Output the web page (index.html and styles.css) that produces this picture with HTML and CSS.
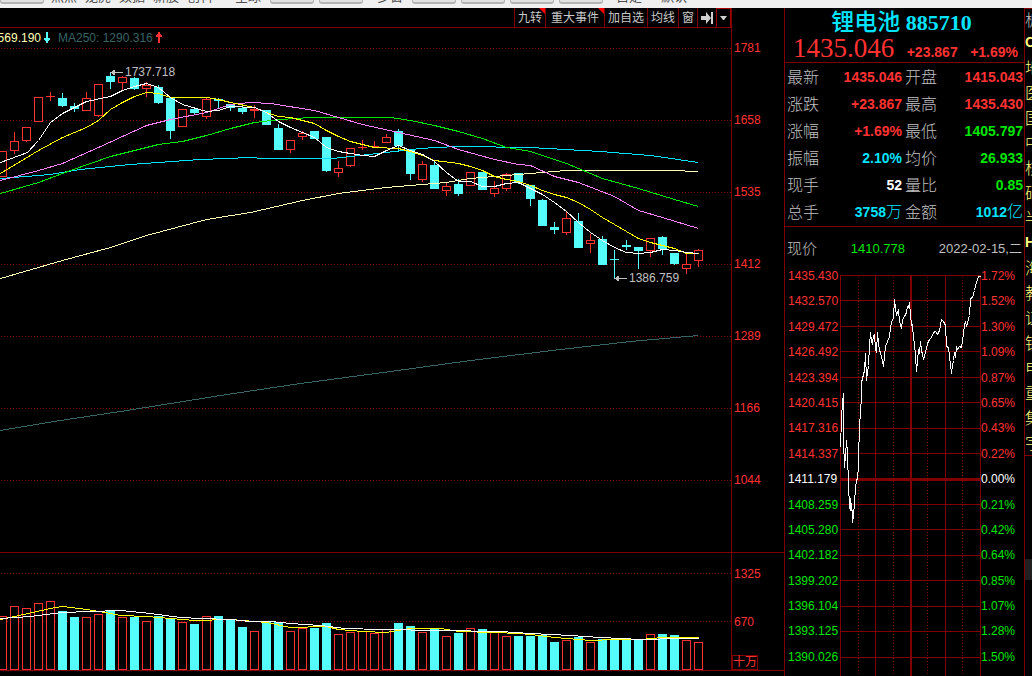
FILE: index.html
```html
<!DOCTYPE html>
<html lang="zh-CN">
<head>
<meta charset="utf-8">
<title>锂电池 885710</title>
<link rel="stylesheet" href="styles.css">
</head>
<body>
<nav class="toolbar">
  <button class="tool">个股</button>
  <div class="links"><a href="#">热点</a><a href="#">龙虎</a><a href="#">数据</a><a href="#">新股</a><a href="#">创科</a></div>
  <div class="links single"><a href="#">全球</a></div>
  <button class="tool">行情</button><button class="tool">期指</button>
  <div class="links single"><a href="#">多窗</a></div>
  <button class="tool">竞价</button><button class="tool">自选</button><button class="tool">大盘</button><button class="tool">涨幅</button>
  <div class="links wide"><a href="#">自定</a><a href="#">默认</a></div>
</nav>
<main class="workspace">
  <section class="charts">
    <div class="pane">
      <div class="plot">
        <div class="tabs">
          <button class="tab flagged">九转</button>
          <button class="tab flagged roomy">重大事件</button>
          <button class="tab">加自选</button>
          <button class="tab">均线</button>
          <button class="tab">窗</button>
          <button class="tab" aria-label="收起"><svg width="12" height="12"><path d="M0 4h5V0l5 6-5 6V8H0zM10 0h2v12h-2z" fill="#d0d0d0"/></svg></button>
          <button class="tab last" aria-label="更多"><svg width="7" height="4"><path d="M0 0h7L4 4H3z" fill="#d0d0d0"/></svg></button>
        </div>
        <div class="legend">
          <span class="ma-pale">569.190</span>
          <svg width="6" height="11"><path d="M2 0h2v6h2v2H5v1H4v2H2V9H1V8H0V6h2z" fill="#54fcfc"/></svg>
          <span class="ma-250">MA250: 1290.316</span>
          <svg width="6" height="11"><path d="M2 11h2V5h2V3H5V2H4V0H2v2H1v1H0v2h2z" fill="#ff3232"/></svg>
        </div>
        <svg class="chart" id="price" viewBox="0 47 731 505" height="505" preserveAspectRatio="xMaxYMin slice"></svg>
      </div>
      <div class="axis price-axis">
        <span>1781</span><span>1658</span><span>1535</span><span>1412</span><span>1289</span><span>1166</span><span>1044</span>
      </div>
    </div>
    <div class="pane">
      <div class="plot"><svg class="chart" id="volume" viewBox="0 553 731 117" height="117" preserveAspectRatio="xMaxYMin slice"></svg></div>
      <div class="axis volume-axis"><span>1325</span><span>670</span><span class="unit">十万</span></div>
    </div>
  </section>
  <aside class="quote">
    <header class="head">
      <h1 class="name"><span class="cn">锂电池</span> 885710</h1>
      <div class="last-price"><strong class="big">1435.046</strong><b>+23.867</b><b>+1.69%</b></div>
    </header>
    <table class="stats">
      <tr><th>最新</th><td class="up">1435.046</td><th>开盘</th><td class="up">1415.043</td></tr>
      <tr><th>涨跌</th><td class="up">+23.867</td><th>最高</th><td class="up">1435.430</td></tr>
      <tr><th>涨幅</th><td class="up">+1.69%</td><th>最低</th><td class="down">1405.797</td></tr>
      <tr><th>振幅</th><td class="info">2.10%</td><th>均价</th><td class="down">26.933</td></tr>
      <tr><th>现手</th><td class="flat">52</td><th>量比</th><td class="down">0.85</td></tr>
      <tr><th>总手</th><td class="info">3758<span class="zh">万</span></td><th>金额</th><td class="info">1012<span class="zh">亿</span></td></tr>
    </table>
    <div class="now"><span class="now-label">现价</span><span class="down">1410.778</span><time datetime="2022-02-15">2022-02-15,<span class="day">二</span></time></div>
    <div class="minute">
      <div class="scale left">
        <span>1435.430</span><span>1432.570</span><span>1429.472</span><span>1426.492</span><span>1423.394</span><span>1420.415</span><span>1417.316</span><span>1414.337</span><span class="flat">1411.179</span><span class="down">1408.259</span><span class="down">1405.280</span><span class="down">1402.182</span><span class="down">1399.202</span><span class="down">1396.104</span><span class="down">1393.125</span><span class="down">1390.026</span>
      </div>
      <svg class="chart" id="minute" viewBox="840 268 141 408" height="408"></svg>
      <div class="scale">
        <span>1.72%</span><span>1.52%</span><span>1.30%</span><span>1.09%</span><span>0.87%</span><span>0.65%</span><span>0.43%</span><span>0.22%</span><span class="flat">0.00%</span><span class="down">0.21%</span><span class="down">0.42%</span><span class="down">0.64%</span><span class="down">0.85%</span><span class="down">1.07%</span><span class="down">1.28%</span><span class="down">1.50%</span>
      </div>
    </div>
  </aside>
  <aside class="sectors">
    <div class="sector-title">板</div>
    <ul class="sector-list">
      <li class="latin">C</li><li>地</li><li>医</li><li>国</li><li>中</li><li>核</li><li>硝</li><li>半</li><li class="latin">H</li><li>海</li><li>教</li><li>证</li><li>钠</li><li>电</li><li>重</li><li>集</li><li>字</li>
    </ul>
    <div class="thumb"></div>
  </aside>
</main>
<script src="chart.js"></script>
</body>
</html>
```

FILE: styles.css
```css
* { box-sizing: border-box; }

body {
  margin: 0;
  min-height: 100vh;
  display: flex;
  flex-direction: column;
  background: #000;
  color: #c0c0c0;
  font: 12px/16px "Liberation Sans", "Noto Sans CJK SC", sans-serif;
  overflow: hidden;
}

button { font: inherit; color: inherit; background: none; border: 0; padding: 0; margin: 0; }
svg { display: block; }

.toolbar {
  height: 8px;
  flex: none;
  overflow: hidden;
  display: flex;
  align-items: flex-end;
  gap: 5px;
  padding-bottom: 4px;
  background: #f0f0f0;
}
.tool {
  width: 44px;
  height: 22px;
  flex: none;
  line-height: 18px;
  border: 1px solid #b4b4b4;
  border-bottom-width: 2px;
  border-radius: 3px;
  background: #e2e2e2;
  color: #1e64c8;
  font-weight: bold;
}
.links { display: flex; margin-left: 2px; }
.links a { width: 34px; line-height: 15px; color: #505050; text-decoration: none; font-size: 13px; }
.links.single { margin-left: 9px; }
.links.single a { width: 30px; }
.links.wide { margin-left: 8px; }
.links.wide a { width: 45px; }

.workspace { flex: 1; display: flex; }
.charts { flex: 1; min-width: 0; }
.pane { display: flex; border-bottom: 1px solid #800000; }
.plot { flex: 1; min-width: 0; }
.chart { width: 100%; shape-rendering: crispEdges; overflow: hidden; }
.note { font: 12px "Liberation Sans", sans-serif; fill: #c0c0c0; }

.tabs { display: flex; justify-content: flex-end; height: 20px; border-bottom: 1px solid #800000; }
.tab {
  display: flex;
  align-items: center;
  padding: 0 3px;
  border-left: 1px solid #800000;
  color: #c8c8c8;
  position: relative;
}
.tab.roomy { padding: 0 5px; }
.tab.last { border: 1px solid #a00000; border-bottom: 0; }
.flagged::after {
  content: "";
  position: absolute;
  top: 0;
  right: 0;
  border-top: 6px solid #ff0000;
  border-left: 6px solid transparent;
}

.legend { display: flex; align-items: center; height: 19px; }
.legend svg { margin: 0 8px 0 3px; }
.ma-pale { width: 41px; display: flex; justify-content: flex-end; color: #ffffb4; }
.ma-250 { color: #376464; }
.legend .ma-250 + svg { margin: 0 3px; }

.axis { width: 53px; border-left: 1px solid #800000; color: #ff3232; display: flex; flex-direction: column; }
.axis span { padding-left: 2px; }
.price-axis { padding-top: 4px; }
.price-axis span { line-height: 72px; }
.volume-axis { padding-top: 11px; }
.volume-axis span { line-height: 20px; }
.volume-axis span:first-child { margin-bottom: 28px; }
.volume-axis .unit {
  width: 26px;
  margin-top: auto;
  padding: 0;
  line-height: 13px;
  white-space: nowrap;
  border: 1px solid #800000;
}

.quote { width: 241px; border: solid #800000; border-width: 0 1px; }
.head { height: 55px; border-bottom: 1px solid #800000; }
.name { margin: 0; text-align: center; font: bold 22px/24px "Liberation Serif", serif; color: #00e4ff; padding-right: 6px; }
.name .cn { font: 500 23px/24px "Noto Sans CJK SC", sans-serif; }
.last-price { display: flex; align-items: baseline; justify-content: space-between; padding: 0 6px 0 8px; color: #ff3232; font-size: 14px; line-height: 26px; }
.big { font: 27px/26px "Liberation Serif", serif; }

.stats { width: 100%; border-spacing: 0; padding: 1px 1px 0 2px; border-bottom: 1px solid #800000; table-layout: fixed; }
.stats th { width: 33px; height: 27px; padding: 0; text-align: left; vertical-align: top; font: 300 16px/25px "Noto Sans CJK SC", sans-serif; white-space: nowrap; }
.stats td { padding: 0 3px 0 0; text-align: right; vertical-align: top; font-weight: bold; font-size: 14px; line-height: 27px; }
.stats td:last-child { padding-right: 0; }
.zh { font: 300 16px/20px "Noto Sans CJK SC", sans-serif; }
.up { color: #ff3232; }
.down { color: #00e600; }
.info { color: #00e4ff; }
.flat { color: #ffffff; }

.now { display: flex; align-items: center; justify-content: space-between; height: 41px; padding: 3px 2px 0; font-size: 13px; }
.now-label { font-size: 15px; font-weight: 300; }
.minute { display: grid; grid-template-columns: 55px 141px 1fr; }
.scale { display: flex; flex-direction: column; justify-content: space-between; color: #ff3232; padding-bottom: 11px; }
.scale .down { color: #00e600; }
.scale .flat { color: #ffffff; }
.scale.left { padding-left: 3px; }

.sectors { width: 7px; overflow: hidden; border-top: 1px solid #800000; font: 300 16px/25px "Noto Sans CJK SC", sans-serif; }
.sector-title { line-height: 21px; height: 21px; width: 16px; }
.sector-list { list-style: none; margin: 0; padding: 0; color: #ffff80; border-bottom: 1px solid #800000; }
.sector-list li { width: 16px; height: 25px; }
.sector-list .latin { font: bold 14px/25px "Liberation Sans", sans-serif; }
.thumb { margin-top: 103px; height: 21px; background: #202020; }
```

FILE: chart.js
```js
const UP = '#ff3232', DOWN = '#54fcfc', GRID = '#800000';
const STEP = 12, FIRST = 2, BASE = 670;

// direction, high, body top, body bottom, low, volume top
const bars = [
  ['u',151,151,177,177,616],['u',132,141,151,154,606],['u',127,127,141,142,608],['u',97,97,122,122,603],
  ['u',92,96,97,101,601],['d',93,98,106,107,611],['d',103,106,109,112,617],['u',92,98,111,111,617],
  ['u',84,84,116,117,614],['d',73,76,82,89,610],['u',76,77,83,90,617],['d',77,78,89,90,617],
  ['u',82,85,89,97,621],['d',85,87,103,104,616],['d',98,98,131,139,618],['u',109,109,127,127,622],
  ['d',108,109,113,114,624],['u',97,99,117,119,616],['d',98,99,101,109,616],['d',104,104,108,111,620],
  ['d',106,108,112,114,627],['u',105,109,111,118,631],['d',110,110,125,125,622],['d',124,128,150,150,622],
  ['u',140,140,150,153,631],['u',131,133,137,140,628],['d',131,131,139,139,628],['d',137,137,171,172,623],
  ['u',161,168,173,177,634],['u',148,148,166,167,632],['u',140,147,148,150,631],['u',141,146,147,147,633],
  ['u',134,137,143,143,629],['d',129,131,146,152,623],['d',149,149,174,180,626],['u',161,164,180,182,632],
  ['d',161,165,189,189,628],['u',182,186,191,196,636],['d',179,184,194,196,633],['u',172,172,186,186,628],
  ['d',172,172,190,190,629],['u',181,188,194,197,632],['u',173,174,189,191,636],['d',173,173,182,184,636],
  ['d',185,185,199,206,636],['d',199,200,226,226,635],['d',222,227,230,234,642],['u',212,218,233,235,640],
  ['d',213,221,248,248,637],['u',234,240,244,253,642],['d',236,239,265,265,639],['d',250,259,260,279,639],
  ['d',240,245,247,250,639],['d',247,247,251,269,639],['u',238,238,251,257,634],['d',236,237,249,255,634],
  ['d',253,253,264,265,635],['u',253,264,269,274,640],['u',249,250,261,267,642]
];

const averages = [
  ['#376464', '0,430 60,420 120,411 170,403 220,395 300,383 390,371 470,360 560,349 630,341 698,335'],
  ['#ffffb4', '0,278 62,260 110,247 146,235 206,219 250,212 302,200 338,193 386,187 422,184 446,182 470,178 530,173 566,170 670,170 698,171'],
  ['#00e4ff', '0,178 50,174 80,169 130,164 200,159 250,157 262,158 332,158 350,156 386,152 410,149 434,147 460,146 530,147 600,151 650,155 698,162'],
  ['#00e600', '0,193 38,182 70,170 110,156 158,144 182,141 206,135 230,128 254,122 280,119 310,117 390,117 410,120 434,125 458,131 482,138 506,147 530,151 566,163 602,178 638,188 674,199 698,206'],
  ['#ff80ff', '0,180 38,170 62,163 98,147 146,125 170,119 206,112 230,104 250,102 270,103 314,110 338,117 362,124 398,132 434,140 458,149 494,159 518,164 530,165 554,176 578,182 614,196 638,210 662,217 698,228'],
  ['#ffff00', '0,173 38,150 62,137 86,127 98,120 110,109 122,102 134,96 146,92 158,93 170,97 206,97 218,99 230,102 254,107 266,112 278,116 290,117 302,120 314,123 326,130 338,136 350,141 362,144 374,147 398,148 410,151 422,155 434,160 458,163 470,166 482,170 494,176 506,179 518,181 530,185 542,190 554,194 566,197 578,202 590,209 602,217 614,224 626,231 638,238 650,242 662,245 674,248 686,253 698,253'],
  ['#ffffff', '0,162 27,152 38,140 50,122 62,113 86,101 110,96 122,90 134,86 146,83 158,87 170,97 182,104 206,111 218,110 230,106 254,107 266,112 278,121 290,127 314,137 326,147 338,151 350,153 362,155 374,156 386,150 398,145 410,150 422,154 434,161 446,172 458,181 470,181 482,186 494,186 506,183 518,182 530,188 542,194 554,202 566,211 578,222 590,232 602,240 614,247 626,252 638,253 650,252 662,249 674,250 686,252 698,253']
];

const volumeAverages = [
  ['#ffff00', '0,619 14,616 50,608 62,606 86,609 98,611 110,613 120,615 146,616 170,618 194,620 230,619 266,622 290,627 326,626 338,629 362,631 386,632 398,630 410,628 440,628 458,631 494,632 518,633 530,634 554,637 590,640 614,639 640,639 662,637 698,637'],
  ['#ffffff', '0,618 30,616 62,612 90,611 120,610 150,613 180,617 200,618 230,619 250,621 270,621 290,623 320,625 345,628 380,629 440,630 500,631 530,633 570,635 600,637 640,639 680,638 698,638']
];

const intraday = '840,447 841,418 842,402 843,393 843,440 844,467 845,455 846,440 847,453 848,485 849,506 850,510 850,498 852,514 852,522 853,515 854,502 855,488 856,480 857,478 858,465 858,453 859,430 860,408 861,400 861,382 863,374 864,370 865,353 866,380 867,372 868,365 869,345 870,332 871,341 872,343 873,335 874,334 875,349 876,352 877,332 878,343 879,349 880,353 882,360 883,366 884,355 885,346 887,341 889,336 890,328 891,322 893,317 894,299 895,308 896,314 898,310 899,321 901,328 902,319 904,316 906,312 907,306 908,307 909,302 910,314 911,325 912,324 913,338 914,343 915,355 916,371 917,360 918,350 919,352 920,341 921,350 922,354 923,359 925,352 927,343 929,339 931,337 933,332 935,331 937,334 939,330 940,325 941,319 943,321 945,325 946,346 948,347 949,356 951,373 952,365 953,360 954,352 955,357 956,347 957,349 959,346 961,347 962,340 964,325 965,321 966,326 967,322 969,315 970,298 972,297 974,290 976,282 978,276 980,276';

const box = (x, y, w, h, fill) => `<rect x="${x}" y="${y}" width="${w}" height="${h}" fill="${fill}"/>`;
const frame = (x, y, w, h) => `<rect x="${x + 0.5}" y="${y + 0.5}" width="${w - 1}" height="${h - 1}" fill="#000" stroke="${UP}"/>`;
const curve = ([color, points]) => `<polyline points="${points}" transform="translate(0.5 0.5)" fill="none" stroke="${color}"/>`;
const dotted = y => `<path d="M1 ${y + 0.5}H731" stroke="${GRID}" stroke-dasharray="1 2"/>`;

function candle([dir, high, top, bottom, low], i) {
  const x = FIRST + i * STEP, color = dir === 'u' ? UP : DOWN;
  const wick = box(x, high, 1, low - high, color);
  const body = dir === 'u' && bottom - top > 2
    ? frame(x - 4, top, 9, bottom - top)
    : box(x - 4, top, 9, bottom - top, color);
  return wick + body;
}

function volumeBar(bar, i) {
  const x = FIRST + i * STEP - 4, top = bar[5];
  return bar[0] === 'u' ? frame(x, top, 9, BASE - top) : box(x, top, 9, BASE - top, DOWN);
}

document.getElementById('price').innerHTML =
  [48, 120, 192, 264, 336, 408, 480].map(dotted).join('') +
  bars.map(candle).join('') + averages.map(curve).join('') +
  '<path d="M111 72.5H123M111 72.5l3-2v4zM615 278.5H627M615 278.5l3-2v4z" stroke="#c0c0c0" fill="#c0c0c0"/>' +
  '<text class="note" x="125" y="76">1737.718</text><text class="note" x="629" y="282">1386.759</text>';

document.getElementById('volume').innerHTML =
  [573, 621].map(dotted).join('') + bars.map(volumeBar).join('') + volumeAverages.map(curve).join('');

const rows = [275, 300, 326, 351, 377, 402, 428, 453, 504, 529, 555, 580, 606, 631, 657];
document.getElementById('minute').innerHTML =
  rows.map(y => box(840, y, 141, 1, GRID)).join('') + box(840, 478, 141, 3, GRID) +
  [840, 875, 945, 980].map(x => box(x, 275, 1, 401, GRID)).join('') + box(910, 275, 2, 401, GRID) +
  [858, 893, 927, 962].map(x => `<path d="M${x + 0.5} 277V676" stroke="${GRID}" stroke-dasharray="1 2"/>`).join('') +
  curve(['#ffffff', intraday]);
```
